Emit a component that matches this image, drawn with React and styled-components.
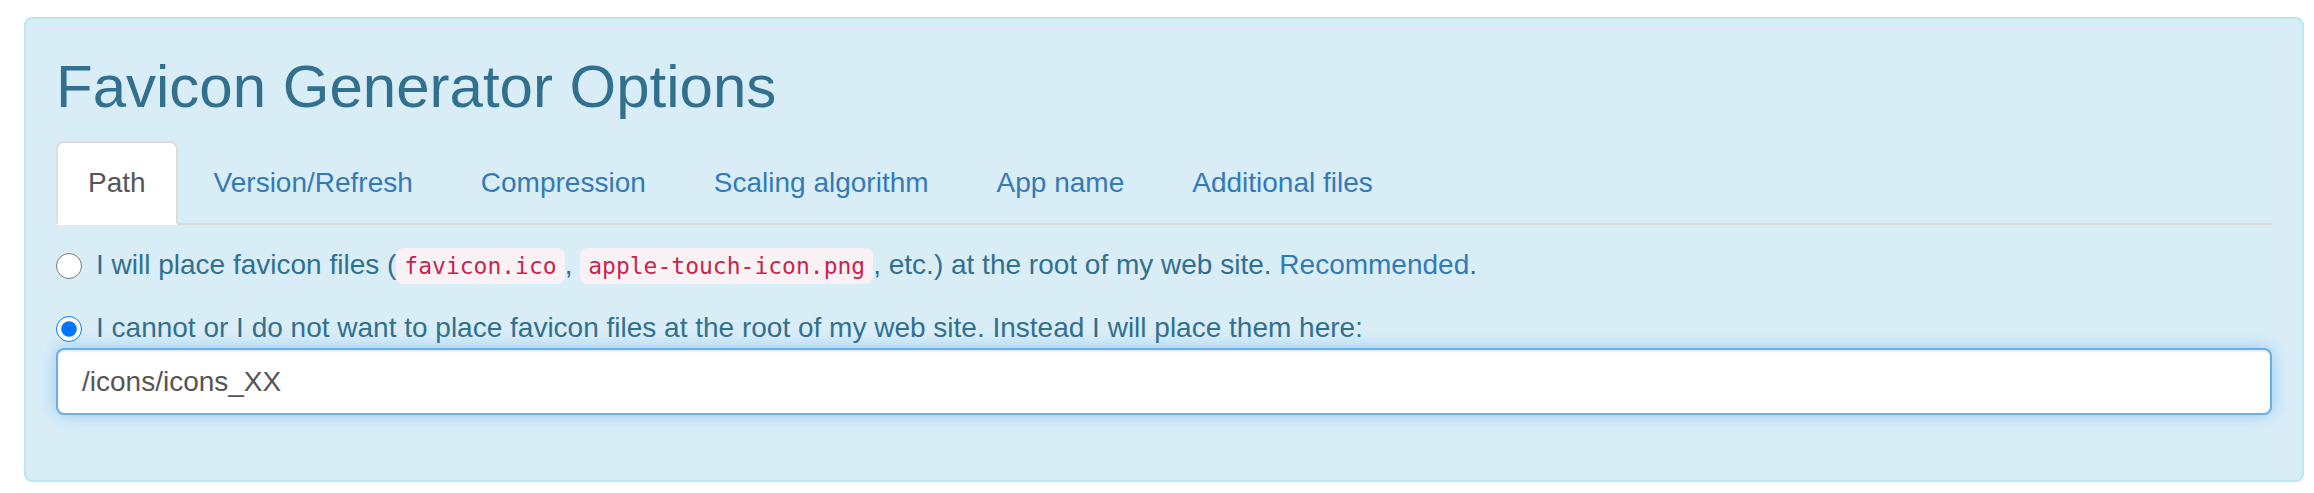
import React from "react";
import styled, { createGlobalStyle } from "styled-components";

const Global = createGlobalStyle`
  html, body { margin: 0; padding: 0; background: #fff; }
  body { font-family: "Liberation Sans", Arial, sans-serif; }
  * { box-sizing: border-box; }
`;

const Page = styled.div`
  padding: 17px 10px 0 24px;
  width: 2314px;
`;

const Panel = styled.div`
  width: 2280px;
  background: #d9edf7;
  border: 2px solid #bce8f1;
  border-radius: 8px;
  padding: 30px 30px 30px 30px;
  color: #31708f;
`;

const Title = styled.h2`
  margin: 5px 0 21px;
  font-family: "Liberation Sans", Arial, sans-serif;
  font-weight: 400;
  font-size: 60px;
  line-height: 66px;
  color: #31708f;
`;

const Tabs = styled.ul`
  display: flex;
  list-style: none;
  margin: 0;
  padding: 0;
  border-bottom: 2px solid #ddd;
`;

const TabItem = styled.li`
  margin: 0 4px -2px 0;
`;

const TabLink = styled.a`
  display: block;
  padding: 20px 30px;
  font-size: 28px;
  line-height: 40px;
  border: 2px solid ${(p) => (p.$active ? "#ddd" : "transparent")};
  border-bottom-color: ${(p) => (p.$active ? "#fff" : "transparent")};
  border-radius: 8px 8px 0 0;
  background: ${(p) => (p.$active ? "#fff" : "transparent")};
  color: ${(p) => (p.$active ? "#555" : "#337ab7")};
  text-decoration: none;
  white-space: nowrap;
`;

const TabContent = styled.div`
  padding-top: 20px;
`;

const RadioRow = styled.label`
  display: flex;
  align-items: flex-start;
  margin-top: ${(p) => p.$gap}px;
  font-size: 28px;
  line-height: 40px;
  color: #31708f;
  white-space: nowrap;
`;

const Radio = styled.input`
  width: 26px;
  height: 26px;
  margin: 8px 14px 0 0;
  flex: none;
  accent-color: #0075ff;
`;

const Code = styled.code`
  font-family: "DejaVu Sans Mono", "Liberation Mono", monospace;
  font-size: 23px;
  padding: 5px 8px;
  color: #c7254e;
  background: #f9f2f4;
  border-radius: 8px;
`;

const Link = styled.a`
  color: #337ab7;
  text-decoration: none;
`;

const TextInput = styled.input`
  display: block;
  width: 100%;
  height: 67px;
  margin: 0 0 35px;
  padding: 12px 24px;
  font-family: "Liberation Sans", Arial, sans-serif;
  font-size: 28px;
  color: #555;
  background: #fff;
  border: 2px solid #66afe9;
  border-radius: 8px;
  outline: none;
  box-shadow: inset 0 2px 2px rgba(0, 0, 0, 0.075), 0 0 16px rgba(102, 175, 233, 0.6);
`;

const tabs = ["Path", "Version/Refresh", "Compression", "Scaling algorithm", "App name", "Additional files"];

export default function App() {
  return (
    <>
      <Global />
      <Page>
        <Panel>
          <Title>Favicon Generator Options</Title>
          <Tabs>
            {tabs.map((t, i) => (
              <TabItem key={t}>
                <TabLink href="#" $active={i === 0}>{t}</TabLink>
              </TabItem>
            ))}
          </Tabs>
          <TabContent>
            <RadioRow $gap={0}>
              <Radio type="radio" name="path" />
              <span>
                I will place favicon files (<Code>favicon.ico</Code>, <Code>apple-touch-icon.png</Code>, etc.) at the root of my web site.{" "}
                <Link href="#">Recommended</Link>.
              </span>
            </RadioRow>
            <RadioRow $gap={22}>
              <Radio type="radio" name="path" defaultChecked />
              <span>I cannot or I do not want to place favicon files at the root of my web site. Instead I will place them here:</span>
            </RadioRow>
            <TextInput type="text" defaultValue="/icons/icons_XX" />
          </TabContent>
        </Panel>
      </Page>
    </>
  );
}
